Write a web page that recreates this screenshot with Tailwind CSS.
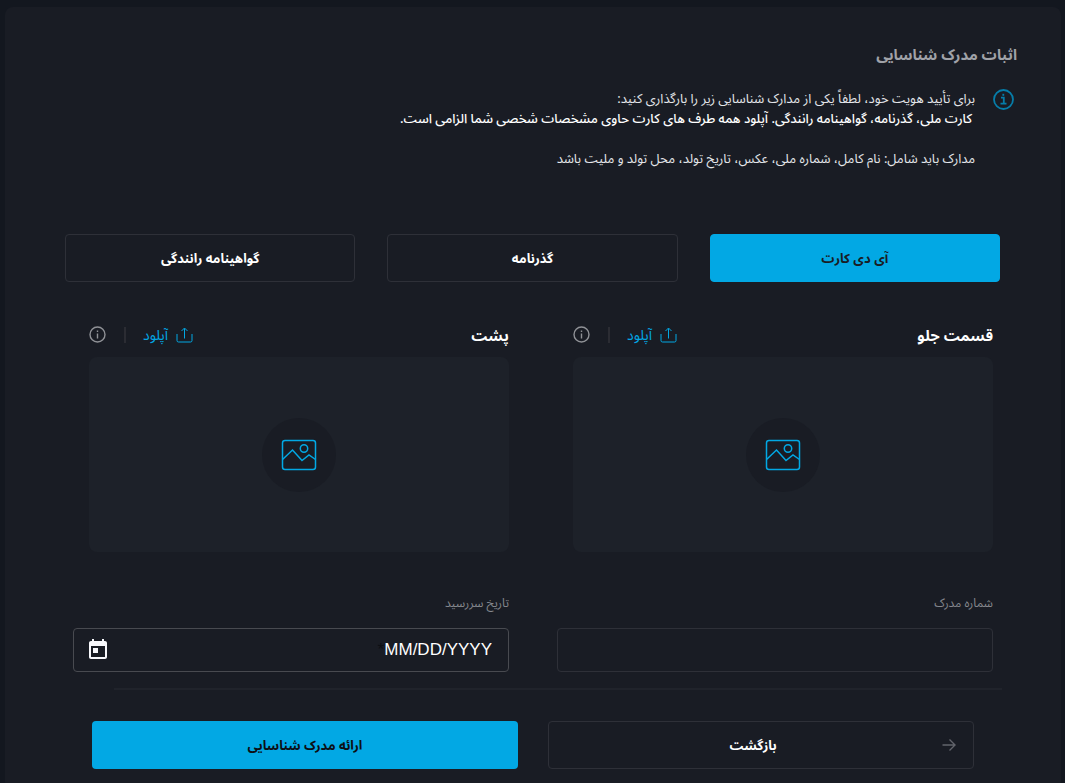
<!DOCTYPE html>
<html lang="fa" dir="rtl">
<head>
    <meta charset="UTF-8">
    <meta name="viewport" content="width=device-width, initial-scale=1.0">
    <title>اثبات مدرک شناسایی</title>
    <script src="https://cdn.jsdelivr.net/npm/@tailwindcss/browser@4"></script>
</head>
<body class="bg-[#13171f] font-['Noto_Sans','Noto_Sans_Arabic','DejaVu_Sans',sans-serif] text-white">
    <main class="mt-[7px] mr-1 ml-[5px] min-h-screen rounded-lg bg-[#191c24] px-11 pt-[35px] pb-4">
        <!-- Intro -->
        <h1 class="text-[15px] leading-6 font-bold text-[#a0a2a8]">اثبات مدرک شناسایی</h1>
        <div class="mt-[17px] flex gap-[18px]">
            <svg class="mt-1.5 mr-[3px] h-[21px] w-[21px] shrink-0 text-[#067da9]" viewBox="0 0 21 21" fill="none" stroke="currentColor" stroke-width="1.8">
                <circle cx="10.5" cy="10.5" r="9.5"/>
                <path d="M8 8.7h2.8v5.8M7.5 14.7h6" />
                <path d="M9.4 5.8h1.8" stroke-width="2"/>
            </svg>
            <div class="pt-[5px] text-[13px] leading-5 text-[#e4e6ea]">
                <p>برای تأیید هویت خود، لطفاً یکی از مدارک شناسایی زیر را بارگذاری کنید:</p>
                <p class="pr-[3px] font-medium text-white">کارت ملی، گذرنامه، گواهینامه رانندگی. آپلود همه طرف های کارت حاوی مشخصات شخصی شما الزامی است.</p>
                <p class="mt-5">مدارک باید شامل: نام کامل، شماره ملی، عکس، تاریخ تولد، محل تولد و ملیت باشد</p>
            </div>
        </div>

        <!-- Document type -->
        <div class="mt-[66px] mr-[17px] ml-4 grid grid-cols-3 gap-8 text-[13px] font-bold">
            <button type="button" class="h-12 rounded border border-[#02a8e4] bg-[#02a8e4] pt-0.5 text-[#191c24]">آی دی کارت</button>
            <button type="button" class="h-12 rounded border border-[#2e3038] pt-0.5">گذرنامه</button>
            <button type="button" class="h-12 rounded border border-[#2e3038] pt-0.5">گواهینامه رانندگی</button>
        </div>

        <form>
            <div class="mt-[41px] mr-6 ml-6 grid grid-cols-2 gap-x-12">
                <!-- Front side -->
                <section class="pl-4">
                    <div class="flex h-[34px] items-start">
                        <h2 class="grow text-[15px] leading-6 font-bold">قسمت جلو</h2>
                        <button type="button" class="flex h-6 items-center gap-2 text-sm text-[#02a8e4]">
                            <svg class="h-4 w-[17px]" viewBox="0 0 17 16" fill="none" stroke="currentColor">
                                <path d="M1 7v6.500q0 1.500 1.500 1.500h12q1.500 0 1.500-1.500V7M8.500 11.500V1.500M5.500 4l3-3 3 3"/>
                            </svg>
                            آپلود
                        </button>
                        <span class="mx-[17px] mt-1 h-4 w-0.5 bg-[#2b2c33]"></span>
                        <button type="button" aria-label="راهنما" class="mt-[3px] mr-[1px] text-[#8f9196]">
                            <svg class="h-[17px] w-[17px]" viewBox="0 0 17 17" fill="none" stroke="currentColor" stroke-width="1.400">
                                <circle cx="8.500" cy="8.500" r="7.500"/>
                                <path d="M8.500 7.500v5M8.500 4.500v1.500"/>
                            </svg>
                        </button>
                    </div>
                    <div class="flex h-[195px] items-center justify-center rounded-lg bg-[#1d2129]">
                        <div class="flex h-[74px] w-[74px] items-center justify-center rounded-full bg-[#191c24] text-[#02a8e4]">
                            <svg class="h-8 w-9" viewBox="0 0 36 32" fill="none" stroke="currentColor" stroke-width="1.500">
                                <rect x="1.500" y="1.500" width="33" height="29" rx="2.500"/>
                                <circle cx="23" cy="9.500" r="3.700"/>
                                <path d="M1.500 20.500l10-9.500 9.500 10.500 7-5.500 6.500 4.500"/>
                            </svg>
                        </div>
                    </div>
                </section>

                <!-- Back side -->
                <section class="pl-4">
                    <div class="flex h-[34px] items-start">
                        <h2 class="grow text-[15px] leading-6 font-bold">پشت</h2>
                        <button type="button" class="flex h-6 items-center gap-2 text-sm text-[#02a8e4]">
                            <svg class="h-4 w-[17px]" viewBox="0 0 17 16" fill="none" stroke="currentColor">
                                <path d="M1 7v6.500q0 1.500 1.500 1.500h12q1.500 0 1.500-1.500V7M8.500 11.500V1.500M5.500 4l3-3 3 3"/>
                            </svg>
                            آپلود
                        </button>
                        <span class="mx-[17px] mt-1 h-4 w-0.5 bg-[#2b2c33]"></span>
                        <button type="button" aria-label="راهنما" class="mt-[3px] mr-[1px] text-[#8f9196]">
                            <svg class="h-[17px] w-[17px]" viewBox="0 0 17 17" fill="none" stroke="currentColor" stroke-width="1.400">
                                <circle cx="8.500" cy="8.500" r="7.500"/>
                                <path d="M8.500 7.500v5M8.500 4.500v1.500"/>
                            </svg>
                        </button>
                    </div>
                    <div class="flex h-[195px] items-center justify-center rounded-lg bg-[#1d2129]">
                        <div class="flex h-[74px] w-[74px] items-center justify-center rounded-full bg-[#191c24] text-[#02a8e4]">
                            <svg class="h-8 w-9" viewBox="0 0 36 32" fill="none" stroke="currentColor" stroke-width="1.500">
                                <rect x="1.500" y="1.500" width="33" height="29" rx="2.500"/>
                                <circle cx="23" cy="9.500" r="3.700"/>
                                <path d="M1.500 20.500l10-9.500 9.500 10.500 7-5.500 6.500 4.500"/>
                            </svg>
                        </div>
                    </div>
                </section>

                <!-- Document details -->
                <div class="mt-[41px]">
                    <label for="doc-number" class="block text-xs leading-5 text-[#85878d]">شماره مدرک</label>
                    <input id="doc-number" type="text" class="mt-[15px] block h-11 w-full rounded border border-[#2e3038] bg-transparent px-4 outline-none">
                </div>
                <div class="mt-[41px]">
                    <label for="expiry" class="block text-xs leading-5 text-[#85878d]">تاریخ سررسید</label>
                    <div class="mt-[15px] flex h-11 items-center rounded border border-[#484a50] px-4 font-['Liberation_Sans',sans-serif] text-[17px]">
                        <input id="expiry" type="text" placeholder="MM/DD/YYYY" class="w-[108px] bg-transparent text-white outline-none placeholder:text-white">
                        <span class="grow text-[#0d0f14]">*</span>
                        <button type="button" aria-label="تقویم" class="-ml-1 text-[#f7f8fc]">
                            <svg class="h-6 w-6" viewBox="0 0 24 24" fill="currentColor">
                                <path d="M19 3h-1V1h-2v2H8V1H6v2H5c-1.110 0-2 .9-2 2v14c0 1.100.89 2 2 2h14c1.100 0 2-.9 2-2V5c0-1.100-.9-2-2-2zm0 16H5V8h14v11zM7 10h5v5H7z"/>
                            </svg>
                        </button>
                    </div>
                </div>
            </div>

            <hr class="mt-4 mr-[15px] ml-[65px] border-t-2 border-[#20232b]">

            <div class="mt-[31px] mr-[43px] ml-[43px] grid grid-cols-2 gap-[30px] text-[13px] font-bold">
                <button type="button" class="flex h-12 items-center rounded border border-[#2e3038] px-4">
                    <svg class="h-4 w-4 text-[#62646b]" viewBox="0 0 16 16" fill="none" stroke="currentColor" stroke-width="1.400">
                        <path d="M1.500 8h12.500M8.500 2.500l5.500 5.500-5.500 5.500"/>
                    </svg>
                    <span class="grow pt-0.5">بازگشت</span>
                </button>
                <button type="submit" class="h-12 rounded bg-[#02a8e4] pt-0.5 text-[#0d0f14]">ارائه مدرک شناسایی</button>
            </div>
        </form>
    </main>
</body>
</html>
